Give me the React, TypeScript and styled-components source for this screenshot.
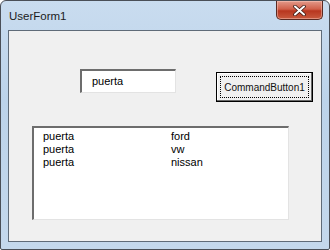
import * as React from 'react';
import styled, { createGlobalStyle } from 'styled-components';

const Global = createGlobalStyle`
  html, body {
    margin: 0;
    padding: 0;
    background: #ffffff;
  }
  * {
    box-sizing: border-box;
  }
`;

const Window = styled.div`
  width: 330px;
  height: 250px;
  border: 1px solid #4a4f57;
  border-radius: 6px 6px 2px 2px;
  background: linear-gradient(180deg, #c9dcef 0%, #bcd3ea 40%, #c4d8ec 100%);
  display: flex;
  flex-direction: column;
  padding: 0 7px 7px 7px;
  overflow: hidden;
  font-family: "Liberation Sans", Arial, sans-serif;
`;

const TitleBar = styled.div`
  height: 29px;
  display: flex;
  align-items: flex-start;
  justify-content: space-between;
`;

const Title = styled.div`
  font-size: 11.5px;
  color: #1b1b1b;
  padding-top: 9px;
  padding-left: 1px;
`;

const CloseButton = styled.div`
  width: 47px;
  height: 19px;
  margin-right: -1px;
  border: 1px solid #5a2a22;
  border-top: 0;
  border-radius: 0 0 5px 5px;
  background: linear-gradient(180deg, #e39a8a 0%, #d0604a 45%, #b8361f 55%, #c85a3e 100%);
  display: flex;
  align-items: center;
  justify-content: center;
  box-shadow: inset 0 0 0 1px rgba(255, 210, 200, 0.45);
`;

const Client = styled.div`
  flex: 1;
  background: #f0f0f0;
  border: 1px solid #5f6b78;
  padding: 38px 0 0 0;
  display: flex;
  flex-direction: column;
`;

const TopRow = styled.div`
  display: flex;
  align-items: flex-start;
`;

const TextBox = styled.div`
  width: 96px;
  height: 24px;
  margin-left: 71px;
  background: #ffffff;
  border-style: solid;
  border-width: 2px 1px 1px 2px;
  border-color: #6d6d6d #e3e3e3 #e3e3e3 #6d6d6d;
  font-size: 11px;
  color: #000;
  padding: 4px 0 0 10px;
`;

const CommandButton = styled.div`
  width: 97px;
  height: 30px;
  margin-left: 40px;
  margin-top: 3px;
  border: 1px solid #000;
  background: #f0f0f0;
  box-shadow: inset -1px -1px 0 #696969, inset 1px 1px 0 #ffffff;
  padding: 3px;
  display: flex;
`;

const FocusRect = styled.div`
  flex: 1;
  border: 1px dotted #000;
  display: flex;
  align-items: center;
  justify-content: center;
  font-size: 10px;
  color: #111;
`;

const ListBox = styled.div`
  width: 257px;
  height: 94px;
  margin-left: 23px;
  margin-top: 24px;
  background: #ffffff;
  border-style: solid;
  border-width: 2px 1px 1px 2px;
  border-color: #6d6d6d #e3e3e3 #e3e3e3 #6d6d6d;
  padding: 2px 0 0 9px;
  display: grid;
  grid-template-columns: 128px 1fr;
  grid-auto-rows: 13px;
  align-content: start;
  font-size: 11px;
  color: #000;
`;

const Cell = styled.div`
  line-height: 13px;
  white-space: nowrap;
`;

const rows = [
  ['puerta', 'ford'],
  ['puerta', 'vw'],
  ['puerta', 'nissan'],
];

export default function App() {
  return (
    <>
      <Global />
      <Window>
        <TitleBar>
          <Title>UserForm1</Title>
          <CloseButton>
            <svg width="13" height="11" viewBox="0 0 13 11">
              <path d="M2 1.5 L11 9.5 M11 1.5 L2 9.5" stroke="#3a1a14" strokeWidth="3.6" strokeLinecap="round" />
              <path d="M2 1.5 L11 9.5 M11 1.5 L2 9.5" stroke="#ffffff" strokeWidth="2" strokeLinecap="round" />
            </svg>
          </CloseButton>
        </TitleBar>
        <Client>
          <TopRow>
            <TextBox>puerta</TextBox>
            <CommandButton>
              <FocusRect>CommandButton1</FocusRect>
            </CommandButton>
          </TopRow>
          <ListBox>
            {rows.map((r, i) => (
              <React.Fragment key={i}>
                <Cell>{r[0]}</Cell>
                <Cell>{r[1]}</Cell>
              </React.Fragment>
            ))}
          </ListBox>
        </Client>
      </Window>
    </>
  );
}
